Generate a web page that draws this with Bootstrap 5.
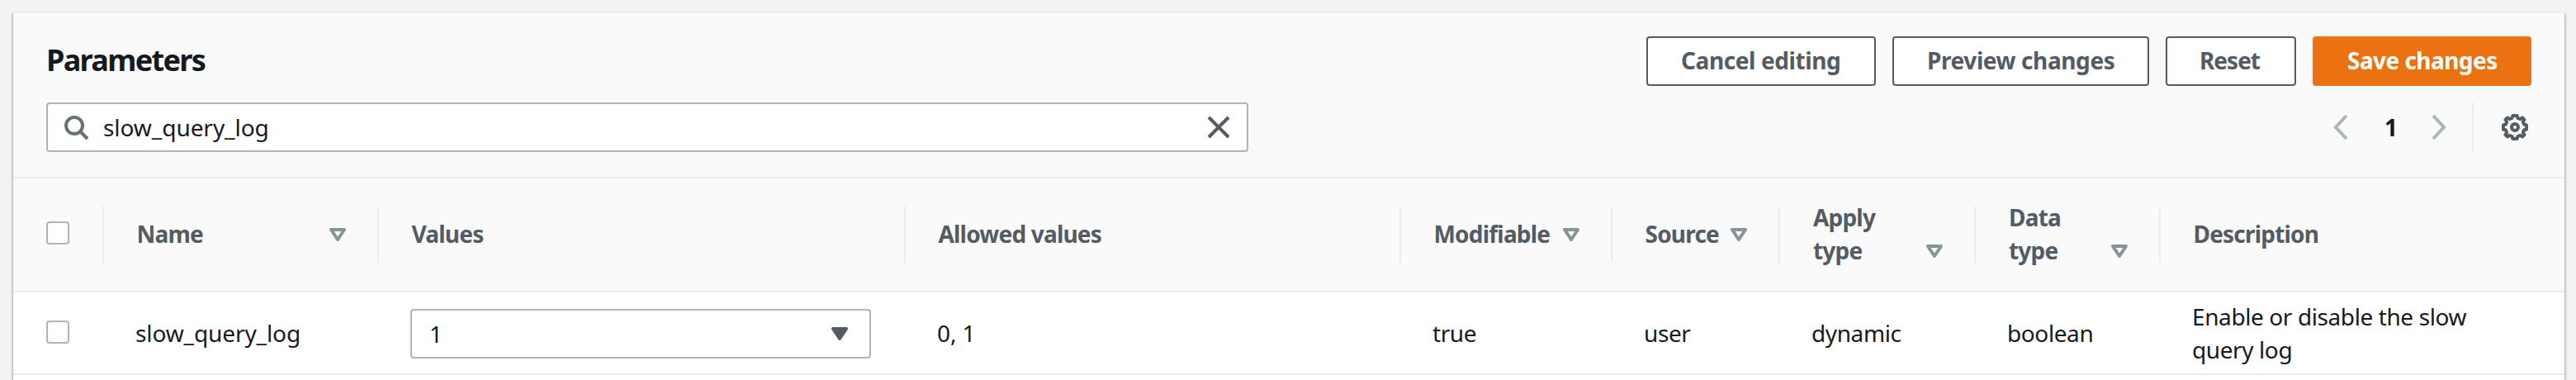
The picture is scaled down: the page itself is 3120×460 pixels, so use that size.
<!DOCTYPE html>
<html lang="en">
<head>
<meta charset="utf-8">
<meta name="viewport" content="width=device-width, initial-scale=1">
<title>Parameters</title>
<link href="https://cdn.jsdelivr.net/npm/bootstrap@5.3.0/dist/css/bootstrap.min.css" rel="stylesheet">
<style>
  body { font: 400 28px/40px "Noto Sans", "Open Sans", sans-serif; color: #16191f; background: #f2f3f3; height: 460px; overflow: hidden; padding: 14px 14px 0 16px; letter-spacing: -.4px; }
  svg { display: block; flex: none; }
  .panel { height: 460px; background: #fff; border-top: 2px solid #eaeded; box-shadow: 0 2px 2px rgba(0,28,36,.3), 2px 2px 2px rgba(0,28,36,.15), -2px 2px 2px rgba(0,28,36,.15); }
  .panel-head { height: 200px; padding: 28px 40px 0; background: #fafafa; border-bottom: 2px solid #eaeded; }
  .title { font-size: 36px; font-weight: 700; line-height: 58px; letter-spacing: -1.65px; }
  .action { height: 60px; padding: 0 38px 2px 40px; border: 2px solid #545b64; border-radius: 4px; background: #fff; color: #545b64; font-size: 28px; font-weight: 700; line-height: 54px; letter-spacing: -.4px; white-space: nowrap; text-align: left; }
  .action-main { background: #ec7211; border-color: #ec7211; color: #fff; }
  .b-cancel { width: 278px; } .b-preview { width: 311px; }
  .b-reset { width: 158px; padding-left: 39px; letter-spacing: -1px; }
  .b-save { width: 265px; letter-spacing: -.55px; }
  .search { width: 1456px; height: 60px; border: 2px solid #aab7b8; border-radius: 4px; background: #fff; padding: 0 20px 0 18px; letter-spacing: -.05px; }
  .search-text { padding-left: 17px; }
  .tool-row { margin-top: 20px; }
  .page-tools { height: 60px; }
  .page-no { font-weight: 700; width: 14px; margin: 0 42px 0 43px; }
  .rule { width: 2px; height: 60px; background: #eaeded; margin: 0 34px 0 30px; }
  .params { table-layout: fixed; border-collapse: separate; border-spacing: 0; width: 3090px; }
  .params th { height: 138px; padding: 0; background: #fafafa; border-bottom: 2px solid #eaeded; color: #545b64; font-weight: 700; letter-spacing: -.8px; vertical-align: middle; }
  .head-cell { height: 68px; border-right: 2px solid #eaeded; padding: 0 38px 0 40px; }
  .head-cell.last { border-right: 0; }
  .head-label { padding-bottom: 2px; margin-left: -.5px; }
  .head-cell .box { margin-bottom: 4px; }
  .two-line { height: 68px; }
  .two-line span { display: block; margin-top: -7px; }
  .sort-low { margin-bottom: 6px; }
  .params td { height: 100px; padding: 0 0 0 38px; border-bottom: 2px solid #eaeded; vertical-align: middle; }
  .params .pick { padding: 0 0 2px 40px; }
  .params .edit { padding-top: 2px; }
  .wide { letter-spacing: -.1px; }
  .box { width: 28px; height: 28px; border: 2px solid #aab7b8; border-radius: 4px; background: #fff; }
  .choice { width: 558px; height: 60px; border: 2px solid #aab7b8; border-radius: 4px; padding: 0 26px 0 21px; }
</style>
</head>
<body>
<svg width="0" height="0" class="position-absolute"><defs>
  <symbol id="sort" viewBox="0 0 20 16"><path d="M2 2H18L10 14Z" fill="none" stroke="#879596" stroke-width="4" stroke-linejoin="round"/></symbol>
</defs></svg>
<main class="panel">
  <header class="panel-head">
    <div class="d-flex justify-content-between">
      <h1 class="title mb-0">Parameters</h1>
      <div class="d-flex" style="gap:20px">
        <button class="action b-cancel">Cancel editing</button>
        <button class="action b-preview">Preview changes</button>
        <button class="action b-reset">Reset</button>
        <button class="action action-main b-save">Save changes</button>
      </div>
    </div>
    <div class="tool-row d-flex justify-content-between">
      <div class="search d-flex align-items-center">
        <svg width="32" height="32" viewBox="0 0 32 32" fill="none" stroke="#687078" stroke-width="4"><circle cx="14" cy="14" r="10"/><path d="m21 21 9 9"/></svg>
        <span class="search-text me-auto">slow_query_log</span>
        <svg width="28" height="28" viewBox="0 0 28 28" stroke="#545b64" stroke-width="4"><path d="m2 2 24 24M26 2 2 26"/></svg>
      </div>
      <div class="page-tools d-flex align-items-center">
        <svg width="20" height="32" viewBox="0 0 20 32" fill="none" stroke="#aab7b8" stroke-width="4"><path d="M17 2 4 16l13 14"/></svg>
        <span class="page-no">1</span>
        <svg width="20" height="32" viewBox="0 0 20 32" fill="none" stroke="#aab7b8" stroke-width="4"><path d="m3 2 13 14L3 30"/></svg>
        <span class="rule"></span>
        <svg width="36" height="32" viewBox="-16 -16 36 32" fill="none" stroke="#545b64" stroke-width="4"><circle r="4"/><path stroke-linejoin="round" d="M-2.5-14H2.5L3.5-11 6.5-9.8 9-11.5 11.5-9 9.8-6.5 11-3.5 14-2.5V2.5L11 3.5 9.8 6.5 11.5 9 9 11.5 6.5 9.8 3.5 11 2.5 14H-2.5L-3.5 11-6.5 9.8-9 11.5-11.5 9-9.8 6.5-11 3.5-14 2.5V-2.5L-11-3.5-9.8-6.5-11.5-9-9-11.5-6.5-9.8-3.5-11Z"/></svg>
      </div>
    </div>
  </header>
  <table class="params">
    <colgroup><col style="width:110px"><col style="width:333px"><col style="width:638px"><col style="width:600px"><col style="width:256px"><col style="width:203px"><col style="width:237px"><col style="width:224px"><col></colgroup>
    <thead><tr>
      <th><div class="head-cell d-flex align-items-center"><span class="box"></span></div></th>
      <th><div class="head-cell d-flex align-items-center justify-content-between"><span class="head-label">Name</span><svg width="20" height="16"><use href="#sort"/></svg></div></th>
      <th><div class="head-cell d-flex align-items-center"><span class="head-label">Values</span></div></th>
      <th><div class="head-cell d-flex align-items-center"><span class="head-label">Allowed values</span></div></th>
      <th><div class="head-cell d-flex align-items-center justify-content-between"><span class="head-label">Modifiable</span><svg width="20" height="16"><use href="#sort"/></svg></div></th>
      <th><div class="head-cell d-flex align-items-center justify-content-between"><span class="head-label">Source</span><svg width="20" height="16"><use href="#sort"/></svg></div></th>
      <th><div class="head-cell d-flex align-items-end justify-content-between"><div class="two-line"><span>Apply<br>type</span></div><svg class="sort-low" width="20" height="16"><use href="#sort"/></svg></div></th>
      <th><div class="head-cell d-flex align-items-end justify-content-between"><div class="two-line"><span>Data<br>type</span></div><svg class="sort-low" width="20" height="16"><use href="#sort"/></svg></div></th>
      <th><div class="head-cell last d-flex align-items-center"><span class="head-label">Description</span></div></th>
    </tr></thead>
    <tbody><tr>
      <td class="pick"><div class="box"></div></td>
      <td class="wide">slow_query_log</td>
      <td class="edit"><div class="choice d-flex align-items-center justify-content-between">1<svg width="20" height="16" viewBox="0 0 20 16"><path d="M2 2H18L10 14Z" fill="#545b64" stroke="#545b64" stroke-width="4" stroke-linejoin="round"/></svg></div></td>
      <td class="wide">0, 1</td>
      <td>true</td>
      <td>user</td>
      <td>dynamic</td>
      <td>boolean</td>
      <td>Enable or disable the slow<br>query log</td>
    </tr></tbody>
  </table>
</main>
<script src="https://cdn.jsdelivr.net/npm/bootstrap@5.3.0/dist/js/bootstrap.bundle.min.js"></script>
</body>
</html>
